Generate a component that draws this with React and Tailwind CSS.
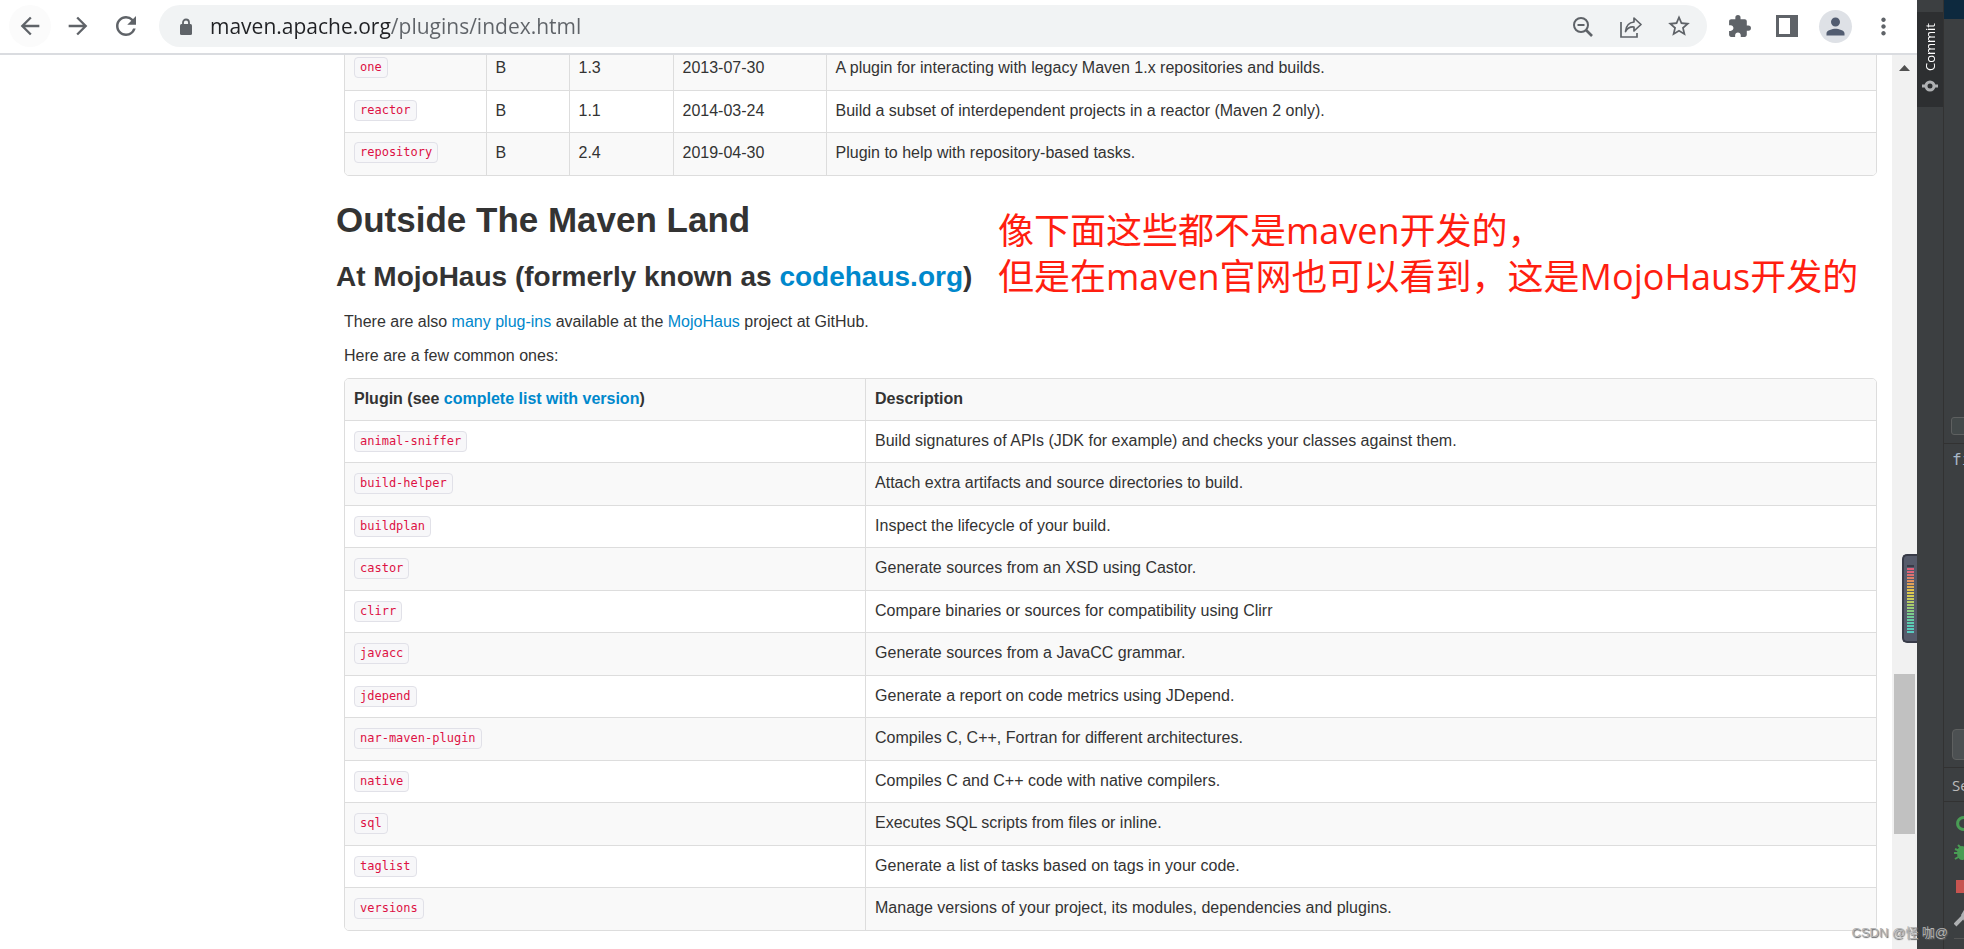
import React from "react";
import { MdArrowBack, MdArrowForward, MdRefresh, MdStarBorder, MdExtension, MdPerson, MdMoreVert } from "react-icons/md";

const corePlugins = [
  { name: "one", type: "B", version: "1.3", date: "2013-07-30", description: "A plugin for interacting with legacy Maven 1.x repositories and builds." },
  { name: "reactor", type: "B", version: "1.1", date: "2014-03-24", description: "Build a subset of interdependent projects in a reactor (Maven 2 only)." },
  { name: "repository", type: "B", version: "2.4", date: "2019-04-30", description: "Plugin to help with repository-based tasks." },
];

const mojoPlugins = [
  { name: "animal-sniffer", description: "Build signatures of APIs (JDK for example) and checks your classes against them." },
  { name: "build-helper", description: "Attach extra artifacts and source directories to build." },
  { name: "buildplan", description: "Inspect the lifecycle of your build." },
  { name: "castor", description: "Generate sources from an XSD using Castor." },
  { name: "clirr", description: "Compare binaries or sources for compatibility using Clirr" },
  { name: "javacc", description: "Generate sources from a JavaCC grammar." },
  { name: "jdepend", description: "Generate a report on code metrics using JDepend." },
  { name: "nar-maven-plugin", description: "Compiles C, C++, Fortran for different architectures." },
  { name: "native", description: "Compiles C and C++ code with native compilers." },
  { name: "sql", description: "Executes SQL scripts from files or inline." },
  { name: "taglist", description: "Generate a list of tasks based on tags in your code." },
  { name: "versions", description: "Manage versions of your project, its modules, dependencies and plugins." },
];

// Level meter bars, top to bottom
const meterColors = [
  "#e0607a", "#e0657a", "#e07070", "#e08068", "#e09060", "#e0a058", "#e0b050", "#e0c04c",
  "#dcc850", "#d4cc54", "#c8cc5c", "#b8cc64", "#a8cc6c", "#98cc74", "#88cc80", "#7ccc8c",
  "#70cc98", "#64cca4", "#5cccb0", "#58ccb8", "#58ccbc", "#58ccc0",
];

const Code = ({ children }) => (
  <a href="#plugin" className="flex w-fit h-[21px] items-center rounded-[4px] border border-[#e1e1e8] bg-[#f7f7f9] px-[5px] font-['DejaVu_Sans_Mono',monospace] text-[12px] text-[#dd1144]">
    {children}
  </a>
);

const Link = ({ children }) => (
  <a href="#link" className="text-[#0088cc]">{children}</a>
);

const BrowserBar = () => (
  <header className="flex h-[55px] shrink-0 items-center border-b-2 border-[#dadce0] bg-white pb-[1px] text-[#5f6368]">
    <div className="flex shrink-0 items-center pl-[9px]">
      <button aria-label="Back" className="flex size-[42px] items-center justify-center rounded-full bg-[#fbfbfb]">
        <MdArrowBack size={28} />
      </button>
      <button aria-label="Forward" className="ml-[6px] flex size-[42px] items-center justify-center">
        <MdArrowForward size={28} />
      </button>
      <button aria-label="Reload" className="ml-[6px] flex size-[42px] items-center justify-center">
        <MdRefresh size={30} />
      </button>
    </div>
    <div className="ml-[12px] flex h-[42px] min-w-0 grow items-center rounded-full bg-[#f1f3f4] pl-[21px] pr-[15px]">
      <svg width="12" height="17" viewBox="0 0 12 17" className="shrink-0">
        <path d="M3 7V4.500a3 3 0 0 1 6 0V7" fill="none" stroke="currentColor" strokeWidth="1.800" />
        <rect y="6" width="12" height="11" rx="1.500" fill="currentColor" />
      </svg>
      {/* Host name is darker than the path */}
      <input
        type="text"
        aria-label="Address"
        defaultValue="maven.apache.org/plugins/index.html"
        className="ml-[18px] h-[34px] min-w-0 grow bg-[linear-gradient(to_right,#202124_181px,#5f6368_181px)] bg-clip-text font-['Open_Sans',sans-serif] text-[21px] leading-[34px] text-transparent outline-none"
      />
      <div className="flex shrink-0 items-center gap-[24px]">
        <button aria-label="Zoom">
          <svg width="24" height="24" viewBox="0 0 24 24" fill="none" stroke="currentColor" strokeWidth="2">
            <circle cx="11" cy="11" r="7" />
            <path d="M16 16l6 6" strokeWidth="2.600" />
            <path d="M7.500 11h7" />
          </svg>
        </button>
        <button aria-label="Share">
          <svg width="24" height="24" viewBox="0 0 24 24" fill="none" stroke="currentColor" strokeWidth="1.700">
            <path d="M3 8V23h16v-4" />
            <path d="M16 4l7 6.500L16 17v-4c-4-.5-6.500 1-8.500 4.500C8 12 11 8.500 16 8V4z" strokeLinejoin="round" />
          </svg>
        </button>
        <button aria-label="Bookmark">
          <MdStarBorder size={26} />
        </button>
      </div>
    </div>
    <div className="flex shrink-0 items-center pl-[20px] pr-[20px]">
      <button aria-label="Extensions">
        <MdExtension size={25} />
      </button>
      <button aria-label="Side panel" className="ml-[24px]">
        <svg width="22" height="22" viewBox="0 0 22 22" fill="currentColor">
          <path d="M0 0h22v22H0zM3 3v16h11V3z" fillRule="evenodd" />
        </svg>
      </button>
      <button aria-label="Profile" className="ml-[21px] flex size-[33px] items-center justify-center rounded-full bg-[#dee1e6] text-[#525c70]">
        <MdPerson size={27} />
      </button>
      <button aria-label="Menu" className="ml-[18px]">
        <MdMoreVert size={27} />
      </button>
    </div>
  </header>
);

const CoreTable = () => (
  <div className="-mt-[9px] overflow-hidden rounded-b-[5px] border border-[#dddddd]">
    <table className="w-full table-fixed border-collapse">
      <colgroup>
        <col className="w-[141px]" />
        <col className="w-[83px]" />
        <col className="w-[104px]" />
        <col className="w-[153px]" />
        <col />
      </colgroup>
      <tbody className="[&>tr>td]:border-l [&>tr>td]:border-t [&>tr>td]:border-[#dddddd] [&>tr>td]:px-[9px] [&>tr>td]:pb-[2px] [&>tr>td:first-child]:border-l-0 [&>tr:first-child>td]:border-t-0">
        {corePlugins.map((plugin) => (
          <tr key={plugin.name} className="h-[42px] odd:h-[43px] odd:bg-[#f9f9f9]">
            <td><Code>{plugin.name}</Code></td>
            <td>{plugin.type}</td>
            <td>{plugin.version}</td>
            <td>{plugin.date}</td>
            <td>{plugin.description}</td>
          </tr>
        ))}
      </tbody>
    </table>
  </div>
);

const MojoTable = () => (
  <div className="overflow-hidden rounded-[5px] border border-[#dddddd]">
    <table className="w-full border-collapse">
      <thead>
        <tr className="h-[41px] bg-[#f9f9f9] text-left">
          <th className="w-[34%] px-[9px] pb-[2px]">Plugin (see <Link>complete list with version</Link>)</th>
          <th className="border-l border-[#dddddd] px-[9px] pb-[2px]">Description</th>
        </tr>
      </thead>
      <tbody>
        {mojoPlugins.map((plugin) => (
          <tr key={plugin.name} className="h-[42px] border-t border-[#dddddd] even:h-[43px] even:bg-[#f9f9f9]">
            <td className="px-[9px]"><Code>{plugin.name}</Code></td>
            <td className="border-l border-[#dddddd] px-[9px] pb-[2px]">{plugin.description}</td>
          </tr>
        ))}
      </tbody>
    </table>
  </div>
);

const Scrollbar = () => (
  <div className="relative flex w-[25px] shrink-0 flex-col items-center bg-[#f1f1f1]">
    <svg width="11" height="6" viewBox="0 0 11 6" className="mt-[10px]">
      <path d="M0 6L5.500 0L11 6z" fill="#505050" />
    </svg>
    <div className="mt-[603px] h-[160px] w-[21px] bg-[#c1c1c1]" />
    <div className="absolute right-0 top-[499px] flex h-[89px] w-[15px] flex-col items-center gap-[1px] rounded-l-[5px] border-2 border-r-0 border-[#383b48] bg-[#565b6b] pt-[9px]">
      <div className="h-[2px] w-[7px] shrink-0 bg-[#383b48]" />
      {meterColors.map((color, i) => (
        <div key={i} className="h-[2px] w-[7px] shrink-0" style={{ backgroundColor: color }} />
      ))}
    </div>
  </div>
);

const IdeStrip = () => (
  <aside className="flex w-[47px] shrink-0 overflow-hidden bg-[#3c3f41] text-[#bbbbbb]">
    <div className="w-[27px] shrink-0 border-r border-[#323232] pt-[12px]">
      <button className="flex h-[95px] w-full flex-col items-center bg-[#2d2f31] pt-[11px] text-white">
        <span className="rotate-180 font-['Open_Sans',sans-serif] text-[13px] leading-[20px] [writing-mode:vertical-rl]">Commit</span>
        <svg width="16" height="12" viewBox="0 0 16 12" fill="none" stroke="#afb1b3" strokeWidth="3" className="mt-[9px]">
          <circle cx="8" cy="6" r="4" />
          <path d="M0 6h4M12 6h4" />
        </svg>
      </button>
    </div>
    <div className="flex w-[60px] shrink-0 flex-col">
      <div className="h-[19px] bg-[#0d293e]" />
      <div className="ml-[7px] mt-[398px] h-[18px] w-[40px] rounded-[3px] border border-[#5e6060] bg-[#43494a]" />
      <div className="mt-[8px] border-t border-[#323232] pl-[8px] pt-[4px] font-['DejaVu_Sans_Mono',monospace] text-[16px] leading-[24px] text-[#a9b7c6]">fi</div>
      <div className="ml-[8px] mt-[257px] h-[31px] w-[40px] rounded-[4px] border border-[#5e6060] bg-[#4c5052]" />
      <div className="mt-[7px] h-[35px] border-y border-[#323232] pl-[8px] font-['Open_Sans',sans-serif] text-[15px] leading-[34px]">Services</div>
      <div className="flex flex-col items-start pl-[10px]">
        <svg width="20" height="18" viewBox="0 0 20 18" className="mt-[13px]">
          <path d="M12 3a6 6 0 1 0 0 11" fill="none" stroke="#499c54" strokeWidth="3" />
        </svg>
        <svg width="20" height="18" viewBox="0 0 20 18" stroke="#499c54" strokeWidth="2" className="mt-[11px]">
          <ellipse cx="8" cy="9" rx="4" ry="6" fill="#499c54" />
          <path d="M4 1l4 4M1 5l5 2M0 9h6M1 15l5-3" />
        </svg>
        <div className="ml-[2px] mt-[18px] size-[13px] bg-[#c75450]" />
        <svg width="20" height="18" viewBox="0 0 20 18" className="mt-[16px]">
          <path d="M1 16L10 7" stroke="#afb1b3" strokeWidth="4" />
          <path d="M7 6l3-5h6v11h-6z" fill="#afb1b3" />
        </svg>
        <div className="mt-[11px] h-[1px] w-[40px] bg-[#555555]" />
      </div>
    </div>
  </aside>
);

const App = () => {
  return (
    <div className="relative flex h-screen overflow-hidden bg-white font-['Liberation_Sans',Arial,sans-serif] text-[16px] leading-[25px] text-[#333333]">
      <div className="flex min-w-0 grow flex-col">
        <BrowserBar />
        <div className="flex min-h-0 grow">
          <main className="relative min-w-0 grow overflow-hidden pl-[344px] pr-[15px]">
            <CoreTable />
            <h1 className="-ml-[8px] mt-[24px] text-[35px] font-bold leading-[40px]">Outside The Maven Land</h1>
            <h2 className="-ml-[8px] mt-[17px] text-[28px] font-bold leading-[40px]">
              At MojoHaus (formerly known as <Link>codehaus.org</Link>)
            </h2>
            <p className="mt-[12px]">
              There are also <Link>many plug-ins</Link> available at the <Link>MojoHaus</Link> project at GitHub.
            </p>
            <p className="mb-[10px] mt-[9px]">Here are a few common ones:</p>
            <MojoTable />
            <p className="absolute left-[998px] top-[153px] whitespace-nowrap font-['Open_Sans','Noto_Sans_CJK_SC',sans-serif] text-[36px] leading-[46px] text-[#ff1e10]">
              像下面这些都不是maven开发的，
              <br />
              但是在maven官网也可以看到，这是MojoHaus开发的
            </p>
          </main>
          <Scrollbar />
        </div>
      </div>
      <IdeStrip />
      <span className="absolute bottom-[6px] right-[16px] font-['Liberation_Sans','Noto_Sans_CJK_SC',sans-serif] text-[13px] leading-[20px] text-[#b4b4b4] [text-shadow:1px_1px_1px_#666]">
        CSDN @怪 咖@
      </span>
    </div>
  );
};

export default App;
